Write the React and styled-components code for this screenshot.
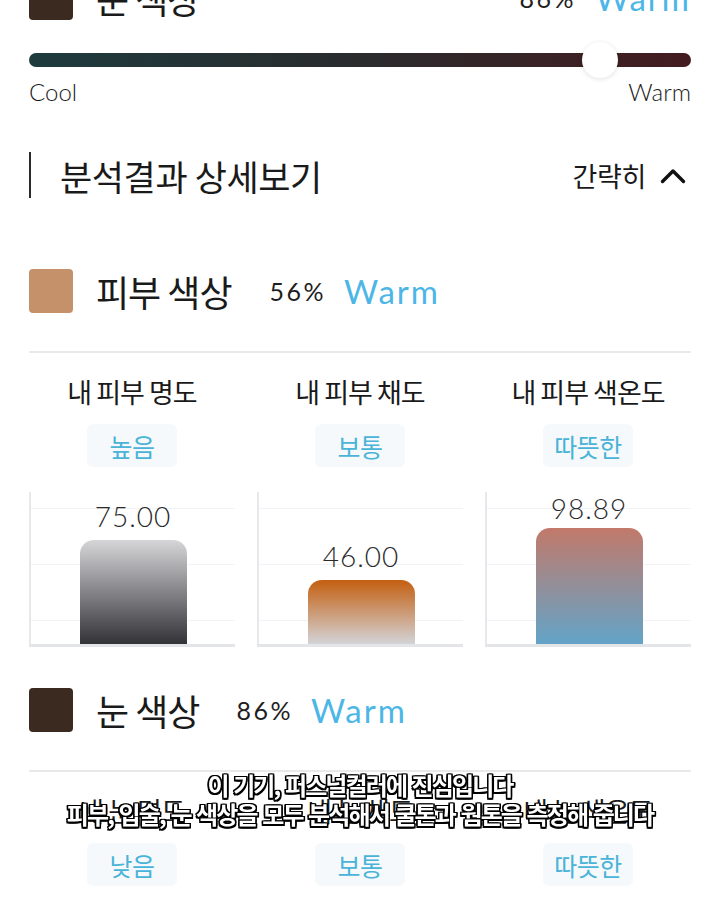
import React from "react";
import styled, { createGlobalStyle } from "styled-components";

const GlobalStyle = createGlobalStyle`
  html, body { margin: 0; padding: 0; background: #ffffff; }
  body {
    font-family: "Lato", "Noto Sans CJK KR", sans-serif;
    color: #222;
    overflow: hidden;
  }
`;

const KR = `"Noto Sans CJK KR", "Noto Sans", sans-serif`;
const LATIN = `"Lato", "Noto Sans CJK KR", sans-serif`;

const Page = styled.div`
  padding: 0 29px;
  margin-top: -24px;
`;

const TopRow = styled.div`
  display: flex;
  align-items: center;
  justify-content: space-between;
  height: 44px;
`;

const Group = styled.div`
  display: flex;
  align-items: center;
`;

const Swatch = styled.div`
  width: 44px;
  height: 44px;
  border-radius: 4px;
  background: ${(p) => p.$color};
  flex-shrink: 0;
`;

const ColorTitle = styled.div`
  font-family: ${KR};
  font-size: 36px;
  font-weight: 400;
  color: #1a1a1a;
  margin-left: 23px;
  line-height: 44px;
  letter-spacing: -1px;
`;

const Percent = styled.span`
  font-family: ${LATIN};
  font-weight: 400;
  font-size: 25px;
  letter-spacing: 2.5px;
  color: #1e1e1e;
  margin-left: ${(p) => p.$gap || 0}px;
`;

const Warm = styled.span`
  font-family: ${LATIN};
  font-weight: 400;
  font-size: 33px;
  letter-spacing: 2px;
  color: #4cb6e6;
  margin-left: ${(p) => p.$gap || 0}px;
`;

const Slider = styled.div`
  position: relative;
  margin-top: 33px;
  height: 14px;
  border-radius: 7px;
  background: linear-gradient(90deg, #1e3b3e 0%, #2a2b2d 50%, #441c20 100%);
`;

const Thumb = styled.div`
  position: absolute;
  top: 50%;
  width: 36px;
  height: 36px;
  margin-top: -18px;
  margin-left: -18px;
  border-radius: 50%;
  background: #fff;
  box-shadow: 0 1px 5px rgba(0, 0, 0, 0.12);
`;

const ScaleLabels = styled.div`
  display: flex;
  justify-content: space-between;
  margin-top: 11px;
  font-family: ${LATIN};
  font-weight: 300;
  font-size: 24px;
  line-height: 28px;
  color: #1a1a1a;
`;

const SectionHeader = styled.div`
  margin-top: 46px;
  height: 46px;
  border-left: 2px solid #2b2b2b;
  padding-left: 29px;
  display: flex;
  align-items: center;
  justify-content: space-between;
`;

const SectionTitle = styled.h2`
  margin: 0;
  font-family: ${KR};
  font-weight: 400;
  font-size: 35px;
  color: #1a1a1a;
  letter-spacing: -0.4px;
`;

const Toggle = styled.div`
  display: flex;
  align-items: center;
  gap: 14px;
  font-family: ${KR};
  font-size: 27px;
  color: #1a1a1a;
  letter-spacing: -0.3px;
  margin-right: 5px;
`;

const Section = styled.section`
  position: relative;
  margin-top: ${(p) => p.$top}px;
`;

const ColorRow = styled.div`
  display: flex;
  align-items: center;
`;

const Divider = styled.div`
  margin-top: 38px;
  height: 2px;
  background: #e9e9e9;
`;

const MetricGrid = styled.div`
  display: grid;
  grid-template-columns: repeat(3, 1fr);
  column-gap: 22px;
`;

const Metric = styled.div`
  display: flex;
  flex-direction: column;
  align-items: center;
`;

const MetricLabel = styled.div`
  margin-top: 24px;
  font-family: ${KR};
  font-size: 27px;
  line-height: 30px;
  color: #1a1a1a;
  letter-spacing: -1px;
  white-space: nowrap;
`;

const Badge = styled.div`
  margin-top: 17px;
  width: 90px;
  height: 43px;
  border-radius: 6px;
  background: #f6f9fb;
  display: flex;
  align-items: center;
  justify-content: center;
  font-family: ${KR};
  font-size: 25px;
  letter-spacing: -0.5px;
  color: #4ab3d8;
`;

const Chart = styled.div`
  align-self: stretch;
  margin-top: 25px;
  height: 152px;
  border-left: 2px solid #e6e8ec;
  border-bottom: 3px solid #e3e5e9;
  background:
    linear-gradient(#f0f2f5, #f0f2f5) 0 16px / 100% 1px no-repeat,
    linear-gradient(#f0f2f5, #f0f2f5) 0 72px / 100% 1px no-repeat,
    linear-gradient(#f0f2f5, #f0f2f5) 0 128px / 100% 1px no-repeat;
  display: flex;
  justify-content: center;
  align-items: flex-end;
`;

const BarColumn = styled.div`
  display: flex;
  flex-direction: column;
  align-items: center;
`;

const BarValue = styled.div`
  font-family: ${LATIN};
  font-weight: 300;
  font-size: 28px;
  line-height: 27px;
  letter-spacing: 1px;
  color: #2a2a2a;
  margin-bottom: ${(p) => p.$gap}px;
`;

const Bar = styled.div`
  width: 107px;
  border-radius: 14px 14px 0 0;
  background: linear-gradient(180deg, ${(p) => p.$from} 0%, ${(p) => p.$to} 100%);
`;

const Subtitle = styled.div`
  position: fixed;
  left: 0;
  right: 0;
  top: 770px;
  text-align: center;
  font-family: ${KR};
  font-weight: 700;
  font-size: 24px;
  line-height: 29px;
  letter-spacing: -1.9px;
  word-spacing: 2px;
  color: #fff;
  text-shadow:
    -1.5px -1.5px 0 #000, 1.5px -1.5px 0 #000, -1.5px 1.5px 0 #000, 1.5px 1.5px 0 #000,
    0 -1.5px 0 #000, 0 1.5px 0 #000, -1.5px 0 0 #000, 1.5px 0 0 #000;
`;

const ChevronUp = () => (
  <svg width="26" height="17" viewBox="0 0 26 17" fill="none">
    <polyline
      points="2.5,14.5 13,4 23.5,14.5"
      stroke="#111"
      strokeWidth="3.4"
      strokeLinecap="round"
      strokeLinejoin="round"
    />
  </svg>
);

const skinMetrics = [
  { label: "내 피부 명도", level: "높음", value: "75.00", h: 104, gap: 10, from: "#d6d5d8", to: "#333236" },
  { label: "내 피부 채도", level: "보통", value: "46.00", h: 64, gap: 10, from: "#c45f10", to: "#d3d3d7" },
  { label: "내 피부 색온도", level: "따뜻한", value: "98.89", h: 116, gap: 6, from: "#c2796a", to: "#63a4c8" },
];

const eyeMetrics = [
  { label: "내 눈 명도", level: "낮음", value: "21.00", h: 30, gap: 10, from: "#d6d5d8", to: "#333236" },
  { label: "내 눈 채도", level: "보통", value: "40.00", h: 56, gap: 10, from: "#c45f10", to: "#d3d3d7" },
  { label: "내 눈 색온도", level: "따뜻한", value: "86.00", h: 100, gap: 10, from: "#c2796a", to: "#63a4c8" },
];

const Metrics = ({ items }) => (
  <MetricGrid>
    {items.map((m) => (
      <Metric key={m.label}>
        <MetricLabel>{m.label}</MetricLabel>
        <Badge>{m.level}</Badge>
        <Chart>
          <BarColumn>
            <BarValue $gap={m.gap}>{m.value}</BarValue>
            <Bar $from={m.from} $to={m.to} style={{ height: m.h }} />
          </BarColumn>
        </Chart>
      </Metric>
    ))}
  </MetricGrid>
);

export default function App() {
  return (
    <>
      <GlobalStyle />
      <Page>
        <TopRow>
          <Group>
            <Swatch $color="#3b2a20" />
            <ColorTitle>눈 색상</ColorTitle>
          </Group>
          <Group>
            <Percent>86%</Percent>
            <Warm $gap={19}>Warm</Warm>
          </Group>
        </TopRow>
        <Slider>
          <Thumb style={{ left: "86.3%" }} />
        </Slider>
        <ScaleLabels>
          <span>Cool</span>
          <span>Warm</span>
        </ScaleLabels>

        <SectionHeader>
          <SectionTitle>분석결과 상세보기</SectionTitle>
          <Toggle>
            간략히
            <ChevronUp />
          </Toggle>
        </SectionHeader>

        <Section $top={71}>
          <ColorRow>
            <Swatch $color="#c4916b" />
            <ColorTitle>피부 색상</ColorTitle>
            <Percent $gap={38}>56%</Percent>
            <Warm $gap={18}>Warm</Warm>
          </ColorRow>
          <Divider />
          <Metrics items={skinMetrics} />
        </Section>

        <Section $top={41}>
          <ColorRow>
            <Swatch $color="#3b2a20" />
            <ColorTitle>눈 색상</ColorTitle>
            <Percent $gap={37}>86%</Percent>
            <Warm $gap={18}>Warm</Warm>
          </ColorRow>
          <Divider />
          <Metrics items={eyeMetrics} />
        </Section>
      </Page>
      <Subtitle>
        이 기기, 퍼스널컬러에 진심입니다
        <br />
        피부, 입술, 눈 색상을 모두 분석해서 쿨톤과 웜톤을 측정해 줍니다
      </Subtitle>
    </>
  );
}
